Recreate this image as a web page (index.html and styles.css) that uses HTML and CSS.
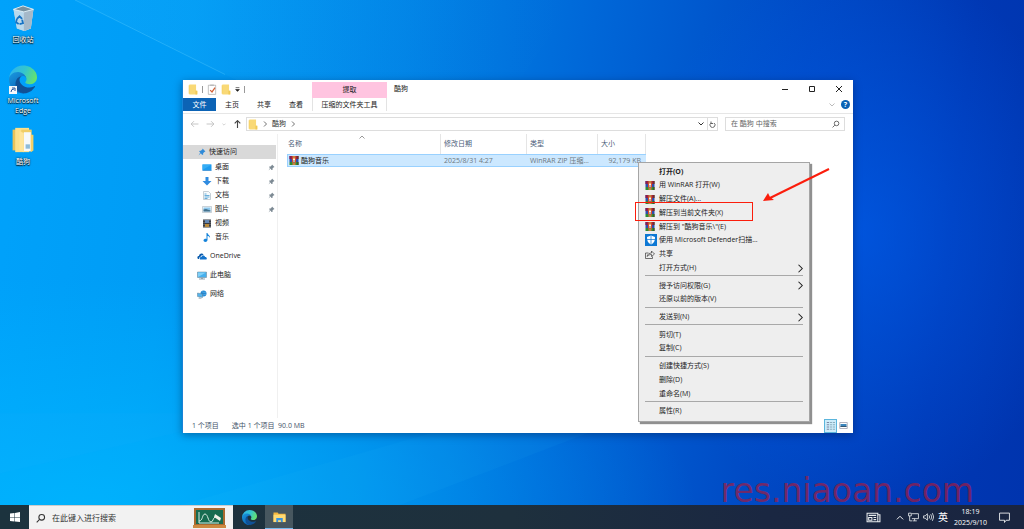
FILE: index.html
```
<!DOCTYPE html>
<html lang="zh-CN">
<head>
  <meta charset="UTF-8">
  <title>酷狗</title>
  <meta name="viewport" content="width=device-width, initial-scale=1">
  <link rel="stylesheet" href="styles.css">
</head>
<body>

<!-- shared icons -->
<svg class="defs" aria-hidden="true">
  <defs>
    <linearGradient id="edge-a" x1="0" y1="0.3" x2="1" y2="0.6">
      <stop offset="0" stop-color="#2fb4ee"/><stop offset="0.5" stop-color="#33c5cf"/><stop offset="1" stop-color="#68e36a"/>
    </linearGradient>
    <linearGradient id="edge-b" x1="0" y1="0" x2="0.6" y2="1">
      <stop offset="0" stop-color="#1b9de2"/><stop offset="1" stop-color="#0a5fb4"/>
    </linearGradient>
    <linearGradient id="beam" x1="0" y1="0" x2="1" y2="0">
      <stop offset="0" stop-color="#5fd0ff" stop-opacity="0.3"/><stop offset="1" stop-color="#5fd0ff" stop-opacity="0"/>
    </linearGradient>
  </defs>
  <symbol id="folder" viewBox="0 0 16 18">
    <path d="M1 2h10v14H1z" fill="#f3cb57"/>
    <path d="M2 1h11v10h2v6H2z" fill="#f9d976"/>
    <path d="M12 11h3v6h-3z" fill="#f0c956"/>
  </symbol>
  <symbol id="winrar" viewBox="0 0 20 18">
    <path d="M1 0h18v6H1z" fill="#a3203c"/>
    <path d="M1 6h18v6H1z" fill="#2d4fae"/>
    <path d="M1 12h18v6H1z" fill="#2e8a35"/>
    <path d="M1 0h2v6H1z" fill="#5a2173"/>
    <path d="M17 0h2v6h-2zM17 12h2v6h-2z" fill="#43391f"/>
    <path d="M7 0h6v18H7z" fill="#c9823c"/>
    <path d="M6 5h8v8H6z" fill="#e04a2a"/>
    <path d="M8 5h4v7H8z" fill="#fff5e0"/>
    <path d="M9 8h2v6H9z" fill="#70757c"/>
  </symbol>
  <symbol id="edge" viewBox="0 0 256 256">
    <path d="M106 241a79 79 0 0 1-23-21 81 81 0 0 1 30-120c3-2 8-4 15-4a32 32 0 0 1 26 13 32 32 0 0 1 6 19c0 0 25-80-80-80-44 0-80 42-80 78a130 130 0 0 0 12 56 128 128 0 0 0 157 67 76 76 0 0 1-63-8z" fill="url(#edge-b)"/>
    <path d="M231 190c-3 2-7 4-10 5a102 102 0 0 1-36 6c-47 0-89-32-89-74a32 32 0 0 1 17-27c-43 2-54 46-54 72 0 74 68 82 83 82 8 0 20-2 27-5l1 0a128 128 0 0 0 67-53 4 4 0 0 0-6-6z" fill="#105196"/>
    <path d="M152 149c-1 1-3 2-3 6 0 2 2 5 5 7 14 10 41 9 41 9a60 60 0 0 0 31-9A61 61 0 0 0 256 109c0-22-8-37-11-44C223 24 178 0 128 0A128 128 0 0 0 0 126c1-36 37-66 80-66 4 0 24 0 42 10 16 9 25 19 31 30 6 10 7 24 7 29 0 5-3 13-8 20z" fill="url(#edge-a)"/>
  </symbol>
  <symbol id="pin" viewBox="0 0 14 14">
    <path d="M8 1l5 5-2 1-2 2 0 3-2 0-2-3-4 4 3-5-2-2 1-1h2l3-3z" fill="currentColor"/>
  </symbol>
  <symbol id="lens" viewBox="0 0 14 14">
    <path d="M5 9L1 13" fill="none" stroke="currentColor" stroke-width="1.5"/>
    <circle cx="8" cy="6" r="4" fill="none" stroke="currentColor" stroke-width="1.5"/>
  </symbol>
  <symbol id="right" viewBox="0 0 8 12">
    <path d="M2 1l5 5-5 5" fill="none" stroke="currentColor" stroke-width="1.4"/>
  </symbol>
  <symbol id="down" viewBox="0 0 12 8">
    <path d="M1 1l5 5 5-5" fill="none" stroke="currentColor" stroke-width="2"/>
  </symbol>
</svg>

<main class="desktop">
  <svg class="wallpaper" viewBox="0 0 1024 529" preserveAspectRatio="none" aria-hidden="true">
    <path d="M75 0h500L450 190 225 78z" fill="url(#beam)" opacity="0.25"/>
    <path d="M75 0L225 78" stroke="#5fd0ff" stroke-opacity="0.35"/>
    <path d="M0 496L182 452V433H0z" fill="#36b9ff" opacity="0.05"/>
    <path d="M400 529L640 433H500L180 529z" fill="#36c4ff" opacity="0.06"/>
  </svg>

  <nav class="shortcuts">
    <a class="shortcut" href="#">
      <svg class="shortcut-icon" viewBox="0 0 30 30">
        <path d="M4 5l11-4 12 4-3 22-7 3-9-3z" fill="#a9cfe6"/>
        <path d="M4 5l12 3 11-3-3 22-8 3-8-3z" fill="#b9d9ec"/>
        <path d="M16 8l11-3-3 22-8 3z" fill="#a5b9c9"/>
        <path d="M4 5l11-4 12 4-11 3z" fill="#78919f" stroke="#e6f4fb"/>
        <path d="M8 16l3-3 3 3M14 17l1 4-4 1M10 22l-3-2 1-4" fill="none" stroke="#1673c5" stroke-width="2"/>
      </svg>
      <span>回收站</span>
    </a>
    <a class="shortcut shortcut-edge" href="#">
      <svg class="shortcut-icon-large" viewBox="0 0 30 30">
        <use href="#edge" x="1" width="28" height="29"/>
        <path d="M1 21h8v8H1z" fill="#f4f8fb"/>
        <path d="M3 27q0-3 3-3M4 23h3v3" fill="none" stroke="#24539b"/>
      </svg>
      <span>Microsoft<br>Edge</span>
    </a>
    <a class="shortcut" href="#">
      <svg class="shortcut-icon" viewBox="0 0 30 30">
        <path d="M3 3h11v24H3z" fill="#e9c35a"/>
        <path d="M6 1h16v28H6z" fill="#fbe08c"/>
        <path d="M13 3h12v25H13z" fill="#f0cd66"/>
        <path d="M16 6h8v22h-8z" fill="#f6f9fb"/>
        <path d="M18 20h5v5h-5z" fill="#8ebbd9"/>
        <path d="M11 5l5 2v22l-5-2z" fill="#ffe59b"/>
        <path d="M24 9h3v18l-3 2z" fill="#f3d069"/>
      </svg>
      <span>酷狗</span>
    </a>
  </nav>

  <section class="window">
    <header class="titlebar">
      <div class="quick-tools">
        <svg class="icon" viewBox="0 0 16 18"><use href="#folder"/></svg>
        <i class="bar"></i>
        <svg class="icon" viewBox="0 0 16 18">
          <path d="M2 2h12v15H2z" fill="#fff" stroke="#9b9b9b"/>
          <path d="M5 1h6v2H5z" fill="#b5b5b5"/>
          <path d="M5 10l3 3 5-7" fill="none" stroke="#d35f34" stroke-width="2"/>
        </svg>
        <svg class="icon" viewBox="0 0 16 18"><use href="#folder"/></svg>
        <svg class="more" viewBox="0 0 8 8"><path d="M1 1h6M1 4h6L4 7z" fill="#222" stroke="#222"/></svg>
        <i class="bar"></i>
      </div>
      <span class="context-title">提取</span>
      <h1>酷狗</h1>
      <div class="window-buttons">
        <button aria-label="最小化"><svg viewBox="0 0 8 8"><path d="M1 4.500h6" stroke="#222"/></svg></button>
        <button aria-label="最大化"><svg viewBox="0 0 8 8"><path d="M1.500 1.500h5v5h-5z" fill="none" stroke="#222"/></svg></button>
        <button aria-label="关闭"><svg viewBox="0 0 8 8"><path d="M1 1l6 6M7 1L1 7" stroke="#222"/></svg></button>
      </div>
    </header>

    <div class="ribbon">
      <button class="tab tab-file">文件</button>
      <button class="tab">主页</button>
      <button class="tab">共享</button>
      <button class="tab">查看</button>
      <button class="tab tab-tools">压缩的文件夹工具</button>
      <div class="ribbon-end">
        <svg class="chevron pale" viewBox="0 0 12 8"><use href="#down"/></svg>
        <button class="help" aria-label="帮助">?</button>
      </div>
    </div>

    <div class="address-row">
      <div class="history">
        <svg class="arrow pale" viewBox="0 0 16 14"><path d="M15 7H2M7 2L2 7l5 5" fill="none" stroke="currentColor" stroke-width="1.5"/></svg>
        <svg class="arrow pale" viewBox="0 0 16 14"><path d="M1 7h13M9 2l5 5-5 5" fill="none" stroke="currentColor" stroke-width="1.5"/></svg>
        <svg class="chevron-small pale" viewBox="0 0 12 8"><use href="#down"/></svg>
        <svg class="arrow" viewBox="0 0 16 14"><path d="M8 14V2M3 6l5-5 5 5" fill="none" stroke="currentColor" stroke-width="2"/></svg>
      </div>
      <div class="address">
        <svg class="icon" viewBox="0 0 16 18"><use href="#folder"/></svg>
        <svg class="crumb" viewBox="0 0 8 12"><use href="#right"/></svg>
        <span>酷狗</span>
        <svg class="crumb" viewBox="0 0 8 12"><use href="#right"/></svg>
        <svg class="chevron address-drop" viewBox="0 0 12 8"><use href="#down"/></svg>
        <button class="refresh" aria-label="刷新">
          <svg viewBox="0 0 14 14"><path d="M4 4a5 5 0 1 0 6 0M4 1v4h4" fill="none" stroke="#555" stroke-width="1.8"/></svg>
        </button>
      </div>
      <label class="find">
        <input type="text" aria-label="搜索" placeholder="在 酷狗 中搜索">
        <svg viewBox="0 0 14 14"><use href="#lens"/></svg>
      </label>
    </div>

    <div class="panes">
      <nav class="tree">
        <a class="node selected" href="#"><svg class="blue" viewBox="0 0 14 14"><use href="#pin"/></svg>快速访问</a>
        <a class="node child" href="#">
          <svg viewBox="0 0 20 18"><path d="M1 3h18v12H1z" fill="#1e9bef"/><path d="M1 3h18L1 14z" fill="#35adf5"/><path d="M1 14h18v1H1z" fill="#0a6abf"/></svg>
          桌面<svg class="pinned" viewBox="0 0 14 14"><use href="#pin"/></svg></a>
        <a class="node child" href="#">
          <svg viewBox="0 0 20 18"><path d="M7 0h6v8h6l-9 9-9-9h6z" fill="#2f8be0"/></svg>
          下载<svg class="pinned" viewBox="0 0 14 14"><use href="#pin"/></svg></a>
        <a class="node child" href="#">
          <svg viewBox="0 0 20 18"><path d="M3 1h10l4 4v12H3z" fill="#f6fafc" stroke="#93a3ae"/><path d="M5 6h4M5 9h10M5 12h10M5 15h6" stroke="#3a94cf" stroke-width="1.500"/></svg>
          文档<svg class="pinned" viewBox="0 0 14 14"><use href="#pin"/></svg></a>
        <a class="node child" href="#">
          <svg viewBox="0 0 20 18"><path d="M1 3h18v12H1z" fill="#f4f8fa" stroke="#9ba9b3"/><path d="M3 5h14v8H3z" fill="#8cc8ee"/><path d="M3 13V9l5-1 9 3v2z" fill="#44718c"/></svg>
          图片<svg class="pinned" viewBox="0 0 14 14"><use href="#pin"/></svg></a>
        <a class="node child" href="#">
          <svg viewBox="0 0 20 18"><path d="M2 1h16v16H2z" fill="#373b42"/><path d="M6 2h8v6H6z" fill="#6387b5"/><path d="M6 10h8v6H6z" fill="#b88a3b"/><path d="M4 2v14M16 2v14" stroke="#c7cbd0" stroke-dasharray="2 2"/></svg>
          视频</a>
        <a class="node child" href="#">
          <svg viewBox="0 0 20 18"><path d="M9 0h2c0 4 6 4 5 10-1-3-3-4-5-4v8c0 5-8 5-8 1 0-3 4-4 6-3z" fill="#1583da"/></svg>
          音乐</a>
        <a class="node root" href="#">
          <svg viewBox="0 0 20 16"><path d="M2 13c-3-4 0-6 2-6 0-5 7-7 9-2-5 0-6 3-6 4-3 0-3 2-3 4z" fill="#0b5cad"/><path d="M6 14c-2-4 1-5 3-5 0-4 7-4 7 0 5 0 4 5 2 5z" fill="#1273cc"/></svg>
          OneDrive</a>
        <a class="node root" href="#">
          <svg viewBox="0 0 20 18"><path d="M1 2h18v11H1z" fill="#47b0ed" stroke="#668090"/><path d="M2 3h16L2 12z" fill="#80d0f8"/><path d="M8 13h4v2h4v2H4v-2h4z" fill="#93a4af"/></svg>
          此电脑</a>
        <a class="node root" href="#">
          <svg viewBox="0 0 20 18"><circle cx="13" cy="7" r="6" fill="#2287d1"/><path d="M9 3q5 3 9 1M8 9q5 2 11-1" fill="none" stroke="#81c9f5"/><path d="M1 6l10 2v7L1 13z" fill="#54b4ec" stroke="#5e7e94"/><path d="M4 15l5 1v1H3z" fill="#7c8f9b"/></svg>
          网络</a>
      </nav>

      <div class="files">
        <svg class="sort" viewBox="0 0 12 8"><path d="M1 7l5-5 5 5" fill="none" stroke="#777" stroke-width="1.500"/></svg>
        <table>
          <thead>
            <tr><th class="col-name">名称</th><th class="col-date">修改日期</th><th class="col-type">类型</th><th class="col-size">大小</th></tr>
          </thead>
          <tbody>
            <tr>
              <td><span class="file"><svg viewBox="0 0 20 18"><use href="#winrar"/></svg>酷狗音乐</span></td>
              <td>2025/8/31 4:27</td>
              <td>WinRAR ZIP 压缩...</td>
              <td class="size">92,179 KB</td>
            </tr>
          </tbody>
        </table>
      </div>
    </div>

    <footer class="status">
      <span>1 个项目</span>
      <span>选中 1 个项目&nbsp; 90.0 MB</span>
      <div class="views">
        <button class="view active" aria-label="详细信息"><svg viewBox="0 0 12 12"><path d="M1 2h3M1 5h3M1 8h3M1 11h3" stroke="#668"/><path d="M5 2h3M9 2h3M5 5h3M9 5h3M5 8h3M9 8h3M5 11h3M9 11h3" stroke="#79a"/></svg></button>
        <button class="view" aria-label="大图标"><svg viewBox="0 0 12 12"><path d="M1 2h10v8H1z" fill="#fff" stroke="#99a"/><path d="M2 4h8v4H2z" fill="#3c86bd"/><path d="M2 7h8v1H2z" fill="#345"/></svg></button>
      </div>
    </footer>
  </section>

  <div class="menu" role="menu">
    <button class="item default" role="menuitem">打开(O)</button>
    <button class="item with-icon" role="menuitem"><svg viewBox="0 0 20 18"><use href="#winrar"/></svg>用 WinRAR 打开(W)</button>
    <button class="item with-icon" role="menuitem"><svg viewBox="0 0 20 18"><use href="#winrar"/></svg>解压文件(A)...</button>
    <button class="item with-icon" role="menuitem"><svg viewBox="0 0 20 18"><use href="#winrar"/></svg>解压到当前文件夹(X)</button>
    <button class="item with-icon" role="menuitem"><svg viewBox="0 0 20 18"><use href="#winrar"/></svg>解压到 "酷狗音乐\"(E)</button>
    <button class="item with-icon" role="menuitem">
      <svg class="shield" viewBox="0 0 24 24"><path d="M0 0h24v24H0z" fill="#0d78d4"/><path d="M12 3l8 3c0 8-2 12-8 15-6-3-8-7-8-15z" fill="#fff"/><path d="M12 3v18M4 11h16" stroke="#0d78d4" stroke-width="1.500"/></svg>
      使用 Microsoft Defender扫描...</button>
    <button class="item with-icon" role="menuitem">
      <svg viewBox="0 0 20 18"><path d="M7 6H1v11h14v-4M4 13c1-5 5-7 9-7V2l6 6-6 5V9c-4 0-6 1-9 4z" fill="none" stroke="#444" stroke-width="1.500"/></svg>
      共享</button>
    <button class="item" role="menuitem">打开方式(H)<svg class="sub" viewBox="0 0 8 12"><use href="#right"/></svg></button>
    <hr>
    <button class="item" role="menuitem">授予访问权限(G)<svg class="sub" viewBox="0 0 8 12"><use href="#right"/></svg></button>
    <button class="item" role="menuitem">还原以前的版本(V)</button>
    <hr>
    <button class="item" role="menuitem">发送到(N)<svg class="sub" viewBox="0 0 8 12"><use href="#right"/></svg></button>
    <hr>
    <button class="item" role="menuitem">剪切(T)</button>
    <button class="item" role="menuitem">复制(C)</button>
    <hr>
    <button class="item" role="menuitem">创建快捷方式(S)</button>
    <button class="item" role="menuitem">删除(D)</button>
    <button class="item" role="menuitem">重命名(M)</button>
    <hr>
    <button class="item" role="menuitem">属性(R)</button>
  </div>

  <div class="highlight"></div>
  <svg class="pointer" viewBox="0 0 70 36" aria-hidden="true">
    <path d="M67 2L8 31" stroke="#fb1d0c" stroke-width="2"/>
    <path d="M1 34l5-8 2 4 4 3z" fill="#fb1d0c"/>
  </svg>
  <p class="watermark">res.niaoan.com</p>
</main>

<footer class="taskbar">
  <button class="start" aria-label="开始"><svg viewBox="0 0 20 20"><path d="M0 3l9-1v8H0zM10 2l10-2v10H10zM0 11h9v8l-9-1zM10 11h10v9l-10-1z" fill="#fff"/></svg></button>
  <label class="search">
    <svg class="search-lens" viewBox="0 0 14 14"><use href="#lens"/></svg>
    <input type="text" aria-label="搜索" placeholder="在此键入进行搜索">
    <svg class="board" viewBox="0 0 33 20">
      <path d="M1 0h31v17H1z" fill="#a9692f"/><path d="M0 17h33v3H0z" fill="#cc8941"/>
      <path d="M3 2h27v14H3z" fill="#176b50"/>
      <path d="M6 4v11h20M6 13c4 0 3-7 6-7s3 8 6 8c2 0 2-4 4-5" fill="none" stroke="#d8ece3"/>
      <path d="M22 6l6 4-1 3-6-4z" fill="#f0f0e8"/>
    </svg>
  </label>
  <button class="app" aria-label="Microsoft Edge"><svg viewBox="0 0 30 30"><use href="#edge"/></svg></button>
  <button class="app running" aria-label="文件资源管理器">
    <svg viewBox="0 0 28 26"><path d="M1 3h9l2 3h15v18H1z" fill="#f6b73c"/><path d="M1 8h26v16H1z" fill="#ffdb75"/><path d="M7 24v-9h14v9h-4v-4h-6v4z" fill="#3a93dd"/></svg>
  </button>
  <div class="tray">
    <svg class="news" viewBox="0 0 28 20"><path d="M2 2h20v16H2zM22 5h4v13h-4M5 6h14M5 10h6v5H5zM14 10h5M14 14h5" fill="none" stroke="#e8ebee" stroke-width="2"/></svg>
    <svg class="up" viewBox="0 0 12 8"><path d="M1 7l5-5 5 5" fill="none" stroke="#fff" stroke-width="1.500"/></svg>
    <svg class="tray-icon" viewBox="0 0 20 18"><path d="M7 3h12v9H7M12 12v4M9 16h7M1 2h5v5H1zM3 7v9h5" fill="none" stroke="#e8ebee" stroke-width="1.500"/></svg>
    <svg class="tray-icon" viewBox="0 0 20 18"><path d="M1 7h3l4-4v12l-4-4H1zM11 6q2 3 0 6M14 4q4 5 0 10M17 2q5 7 0 14" fill="none" stroke="#e8ebee" stroke-width="1.500"/></svg>
    <span class="ime">英</span>
    <time class="clock">18:19<br>2025/9/10</time>
    <svg class="notice" viewBox="0 0 20 20"><path d="M1 2h18v13h-6l-3 4v-4H1z" fill="none" stroke="#fff" stroke-width="1.500"/></svg>
  </div>
</footer>

</body>
</html>
```
FILE: styles.css
```
* {
  box-sizing: border-box;
}
body {
  margin: 0;
  min-height: 100vh;
  display: flex;
  flex-direction: column;
  font: 7px/10px "Open Sans", "Noto Sans CJK SC", sans-serif;
  color: #222;
}
button, input {
  font: inherit;
  color: inherit;
  border: 0;
  padding: 0;
  margin: 0;
  background: none;
}
a {
  color: inherit;
  text-decoration: none;
}
svg {
  display: block;
  flex: none;
}
.defs {
  position: absolute;
  width: 0;
  height: 0;
}

/* desktop */
.desktop {
  position: relative;
  flex: 1;
  overflow: hidden;
  background:
    radial-gradient(ellipse 22% 55% at 84% 46%, rgba(0, 96, 240, 0.6), rgba(0, 80, 220, 0)),
    radial-gradient(ellipse 60% 45% at 8% 100%, rgba(0, 186, 255, 0.7), rgba(0, 170, 255, 0)),
    linear-gradient(97deg, #00a2fb 0%, #009cf5 18%, #0083e6 38%, #0067d8 55%, #0049c4 75%, #0038b4 90%, #0034ae 100%);
}
.wallpaper {
  position: absolute;
  width: 100%;
  height: 100%;
}
.shortcuts {
  position: relative;
  display: flex;
  flex-direction: column;
  gap: 20px;
  width: 46px;
  padding-top: 5px;
}
.shortcut {
  display: flex;
  flex-direction: column;
  align-items: center;
  gap: 4px;
  text-align: center;
  color: #fff;
  text-shadow: 0 1px 1px #000, 0 0 2px #000;
}
.shortcut-edge {
  margin-bottom: -9px;
  gap: 1px;
}
.shortcut-icon {
  width: 26px;
  height: 26px;
}
.shortcut-icon-large {
  width: 30px;
  height: 30px;
}

/* explorer window */
.window {
  position: absolute;
  top: 80px;
  right: 171px;
  bottom: 72px;
  left: 182px;
  display: flex;
  flex-direction: column;
  background: #fff;
  border: 1px solid #1883d7;
  border-width: 0 0 0 1px;
  box-shadow: 0 2px 8px rgba(0, 20, 60, 0.4);
}
.icon {
  width: 10px;
  height: 11px;
}
.bar {
  width: 1px;
  height: 7px;
  background: #999;
}
.pale {
  color: #bbb;
}
.chevron {
  width: 6px;
  height: 4px;
}
.chevron-small {
  width: 4px;
  height: 3px;
}
.titlebar {
  display: flex;
  height: 18px;
}
.quick-tools {
  display: flex;
  align-items: center;
  gap: 4px;
  width: 129px;
  padding-left: 5px;
}
.more {
  width: 5px;
  height: 5px;
}
.context-title {
  width: 75px;
  margin-top: 2px;
  line-height: 16px;
  text-align: center;
  background: #ffc4e0;
}
.titlebar h1 {
  flex: 1;
  margin: 0;
  padding-left: 7px;
  font-size: 7px;
  font-weight: normal;
  line-height: 18px;
}
.window-buttons {
  display: flex;
  padding-right: 1px;
}
.window-buttons button {
  width: 27px;
  display: grid;
  place-items: center;
}
.window-buttons svg {
  width: 8px;
  height: 8px;
}
.ribbon {
  display: flex;
  height: 16px;
  padding-bottom: 2px;
  border-bottom: 1px solid #e6e6e6;
}
.tab {
  width: 32px;
}
.tab-file {
  width: 33px;
  color: #fff;
  background: #0c63b5;
}
.tab-tools {
  width: 75px;
  border: 1px solid #e3e3e3;
  border-width: 0 1px;
}
.ribbon-end {
  display: flex;
  align-items: center;
  gap: 6px;
  margin-left: auto;
  padding-right: 3px;
}
.help {
  width: 9px;
  height: 9px;
  border-radius: 50%;
  font-weight: bold;
  line-height: 9px;
  color: #fff;
  background: #0a62b4;
}
.address-row {
  display: flex;
  align-items: center;
  height: 20px;
  padding-right: 8px;
}
.history {
  display: flex;
  align-items: center;
  justify-content: space-between;
  width: 63px;
  padding: 0 4px 0 7px;
  color: #444;
}
.history .pale {
  color: #bbb;
}
.arrow {
  width: 9px;
  height: 8px;
}
.address {
  flex: 1;
  display: flex;
  align-items: center;
  gap: 5px;
  height: 14px;
  padding-left: 1px;
  color: #333;
  border: 1px solid #ddd;
}
.crumb {
  width: 4px;
  height: 6px;
}
.address-drop {
  margin-left: auto;
}
.refresh {
  display: grid;
  place-items: center;
  width: 10px;
  height: 12px;
  margin-left: -2px;
  border-left: 1px solid #ddd;
}
.refresh svg {
  width: 7px;
  height: 7px;
}
.find {
  display: flex;
  align-items: center;
  justify-content: space-between;
  width: 120px;
  height: 14px;
  margin-left: 7px;
  padding: 0 4px 0 5px;
  color: #555;
  border: 1px solid #ddd;
}
.find input, .search input {
  flex: 1;
  min-width: 0;
  outline: 0;
}
.find svg {
  width: 8px;
  height: 8px;
}
input::placeholder {
  color: #666;
  opacity: 1;
}

/* folder tree and file list */
.panes {
  flex: 1;
  display: flex;
}
.tree {
  width: 95px;
  padding-top: 11px;
  border-right: 1px solid #f0f0f0;
}
.node {
  display: flex;
  align-items: center;
  gap: 3px;
  height: 14px;
  padding-left: 19px;
}
.node svg {
  width: 10px;
  height: 9px;
}
.node .blue {
  width: 8px;
  height: 8px;
  color: #2e8ad8;
}
.node.selected {
  margin: 0 1px 1px 0;
  padding-left: 15px;
  background: #d9d9d9;
}
.node.root {
  margin-top: 5px;
  padding-left: 14px;
}
.node .pinned {
  width: 7px;
  height: 7px;
  margin-left: auto;
  margin-right: 2px;
  color: #7d8a94;
}
.files {
  position: relative;
  flex: 1;
  padding-left: 9px;
}
.sort {
  position: absolute;
  top: 1px;
  left: 81px;
  width: 6px;
  height: 4px;
}
table {
  table-layout: fixed;
  border-collapse: separate;
  border-spacing: 0;
}
th {
  height: 20px;
  padding: 0 0 0 1px;
  text-align: left;
  font-weight: normal;
  color: #4c607a;
  border-right: 1px solid #e5e5e5;
}
th + th {
  padding-left: 3px;
}
.col-name {
  width: 154px;
}
.col-date {
  width: 86px;
}
.col-type {
  width: 71px;
}
.col-size {
  width: 48px;
}
td {
  height: 13px;
  padding: 0 0 0 3px;
  white-space: nowrap;
  color: #6d7880;
  background: #cce8ff;
  border: 1px solid #99d1ff;
  border-width: 1px 0;
}
td:first-child {
  padding-left: 1px;
  color: #222;
  border-left-width: 1px;
}
td.size {
  padding: 0 5px 0 0;
  text-align: right;
}
.file {
  display: flex;
  align-items: center;
  gap: 2px;
}
.file svg {
  width: 10px;
  height: 9px;
}
.status {
  display: flex;
  align-items: center;
  gap: 13px;
  height: 15px;
  padding-left: 9px;
  color: #3f5268;
}
.views {
  display: flex;
  margin-left: auto;
  padding-right: 3px;
}
.view {
  display: grid;
  place-items: center;
  width: 13px;
  height: 14px;
}
.view.active {
  background: #ccecfa;
  border: 1px solid #5bb5dc;
}
.view svg {
  width: 9px;
  height: 9px;
}

/* context menu */
.menu {
  position: absolute;
  top: 162px;
  left: 638px;
  display: flex;
  flex-direction: column;
  justify-content: space-between;
  width: 172px;
  min-height: 260px;
  padding: 2px 6px 3px;
  background: #eee;
  border: 1px solid #a5a5a5;
  box-shadow: 2px 2px 1px rgba(70, 70, 70, 0.6);
}
.item {
  display: flex;
  align-items: center;
  height: 13px;
  padding-left: 14px;
  text-align: left;
  color: #1c1c1c;
  white-space: nowrap;
}
.with-icon {
  gap: 4px;
  padding-left: 0;
}
.default {
  font-weight: bold;
}
.item svg {
  width: 10px;
  height: 9px;
}
.item .shield {
  width: 12px;
  height: 12px;
  margin-right: -2px;
}
.item .sub {
  width: 6px;
  height: 9px;
  margin-left: auto;
}
.menu hr {
  width: 100%;
  height: 3px;
  margin: 0;
  border: 0;
  border-top: 1px solid #a8a8a8;
}
.highlight {
  position: absolute;
  top: 202px;
  left: 635px;
  width: 118px;
  height: 19px;
  border: 1px solid #fb1d0c;
}
.pointer {
  position: absolute;
  top: 167px;
  left: 762px;
  width: 70px;
  height: 36px;
}
.watermark {
  position: absolute;
  right: 50px;
  bottom: 0;
  margin: 0;
  font: 33px/28px "DejaVu Sans", sans-serif;
  color: rgba(190, 20, 45, 0.6);
}

/* taskbar */
.taskbar {
  display: flex;
  height: 24px;
  color: #fff;
  background: linear-gradient(90deg, #1c333e, #1e303d 50%, #1a2742 75%, #1a2540);
}
.start {
  display: grid;
  place-items: center;
  width: 29px;
}
.start svg {
  width: 10px;
  height: 10px;
}
.search {
  display: flex;
  align-items: center;
  gap: 6px;
  width: 204px;
  padding: 0 7px;
  color: #333;
  background: #f2f2f2;
  border-top: 1px solid #ccc;
}
.search input {
  font-size: 8px;
}
.search input::placeholder {
  color: #333;
}
.search-lens {
  width: 10px;
  height: 10px;
}
.board {
  width: 33px;
  height: 20px;
}
.app {
  display: grid;
  place-items: center;
  width: 32px;
}
.app svg {
  width: 15px;
  height: 15px;
}
.running {
  width: 28px;
  background: #47575f;
  border-bottom: 1px solid #76b9ed;
}
.running svg {
  width: 13px;
  height: 12px;
}
.tray {
  display: flex;
  align-items: center;
  gap: 4px;
  margin-left: auto;
  padding-right: 14px;
}
.news {
  width: 15px;
  height: 11px;
  margin-right: 11px;
}
.up {
  width: 8px;
  height: 5px;
}
.tray-icon {
  width: 11px;
  height: 10px;
}
.ime {
  font-size: 10px;
}
.clock {
  width: 37px;
  line-height: 11px;
  text-align: center;
}
.notice {
  width: 11px;
  height: 11px;
  margin-left: 6px;
}
```
